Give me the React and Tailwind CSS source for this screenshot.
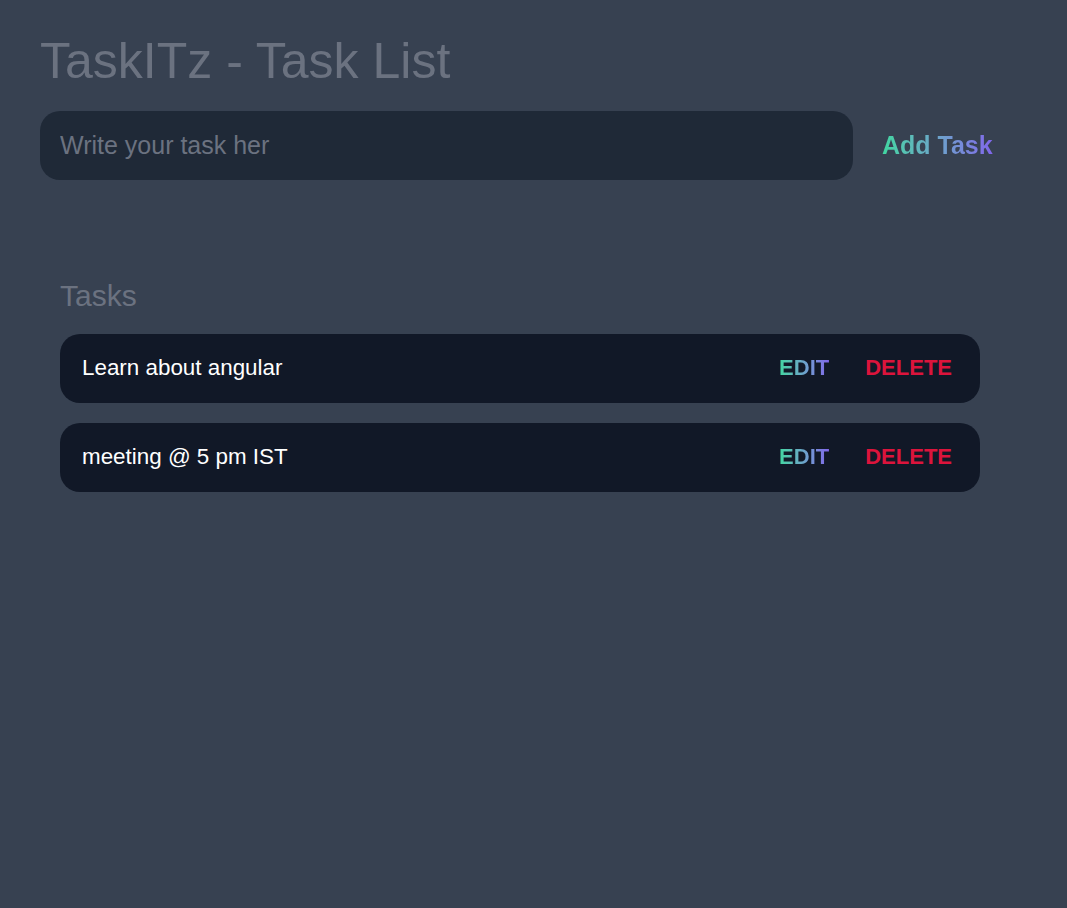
import React from 'react';

const tasks = ['Learn about angular', 'meeting @ 5 pm IST'];

const font = { fontFamily: '"Liberation Sans", Arial, sans-serif' };

export default function App() {
  return <div className="min-h-screen bg-[#374151] p-10" style={font}>
      {/* header */}
      <h1 className="text-[50px] leading-[42px] text-[#6b7280]">TaskITz - Task List</h1>

      {/* add form */}
      <div className="mt-[29px] flex items-center">
        <input placeholder="Write your task her" className="h-[69px] w-[813px] rounded-[20px] bg-[#1f2937] px-5 text-[25px] text-gray-300 placeholder:text-[#6b7280] outline-none" />
        <button className="ml-[29px] bg-gradient-to-r from-[#3fd6a0] to-[#8066ea] bg-clip-text text-[25px] font-bold text-transparent">
          Add Task
        </button>
      </div>

      {/* task list */}
      <div className="mt-[98px] px-5">
        <h2 className="text-3xl text-[#6b7280]">Tasks</h2>
        <div className="mt-5 flex w-[920px] flex-col gap-5">
          {tasks.map(t => <div key={t} className="flex h-[69px] items-center rounded-[20px] bg-[#111827] pl-[22px] pr-[28px] pb-[2px]">
              <span className="flex-1 text-[22.4px] text-white">{t}</span>
              <button className="bg-gradient-to-r from-[#3fd6a0] to-[#8066ea] bg-clip-text text-[22px] font-bold text-transparent">EDIT</button>
              <button className="ml-9 text-[22px] font-bold text-[#dc143c]">DELETE</button>
            </div>)}
        </div>
      </div>
    </div>;
}
